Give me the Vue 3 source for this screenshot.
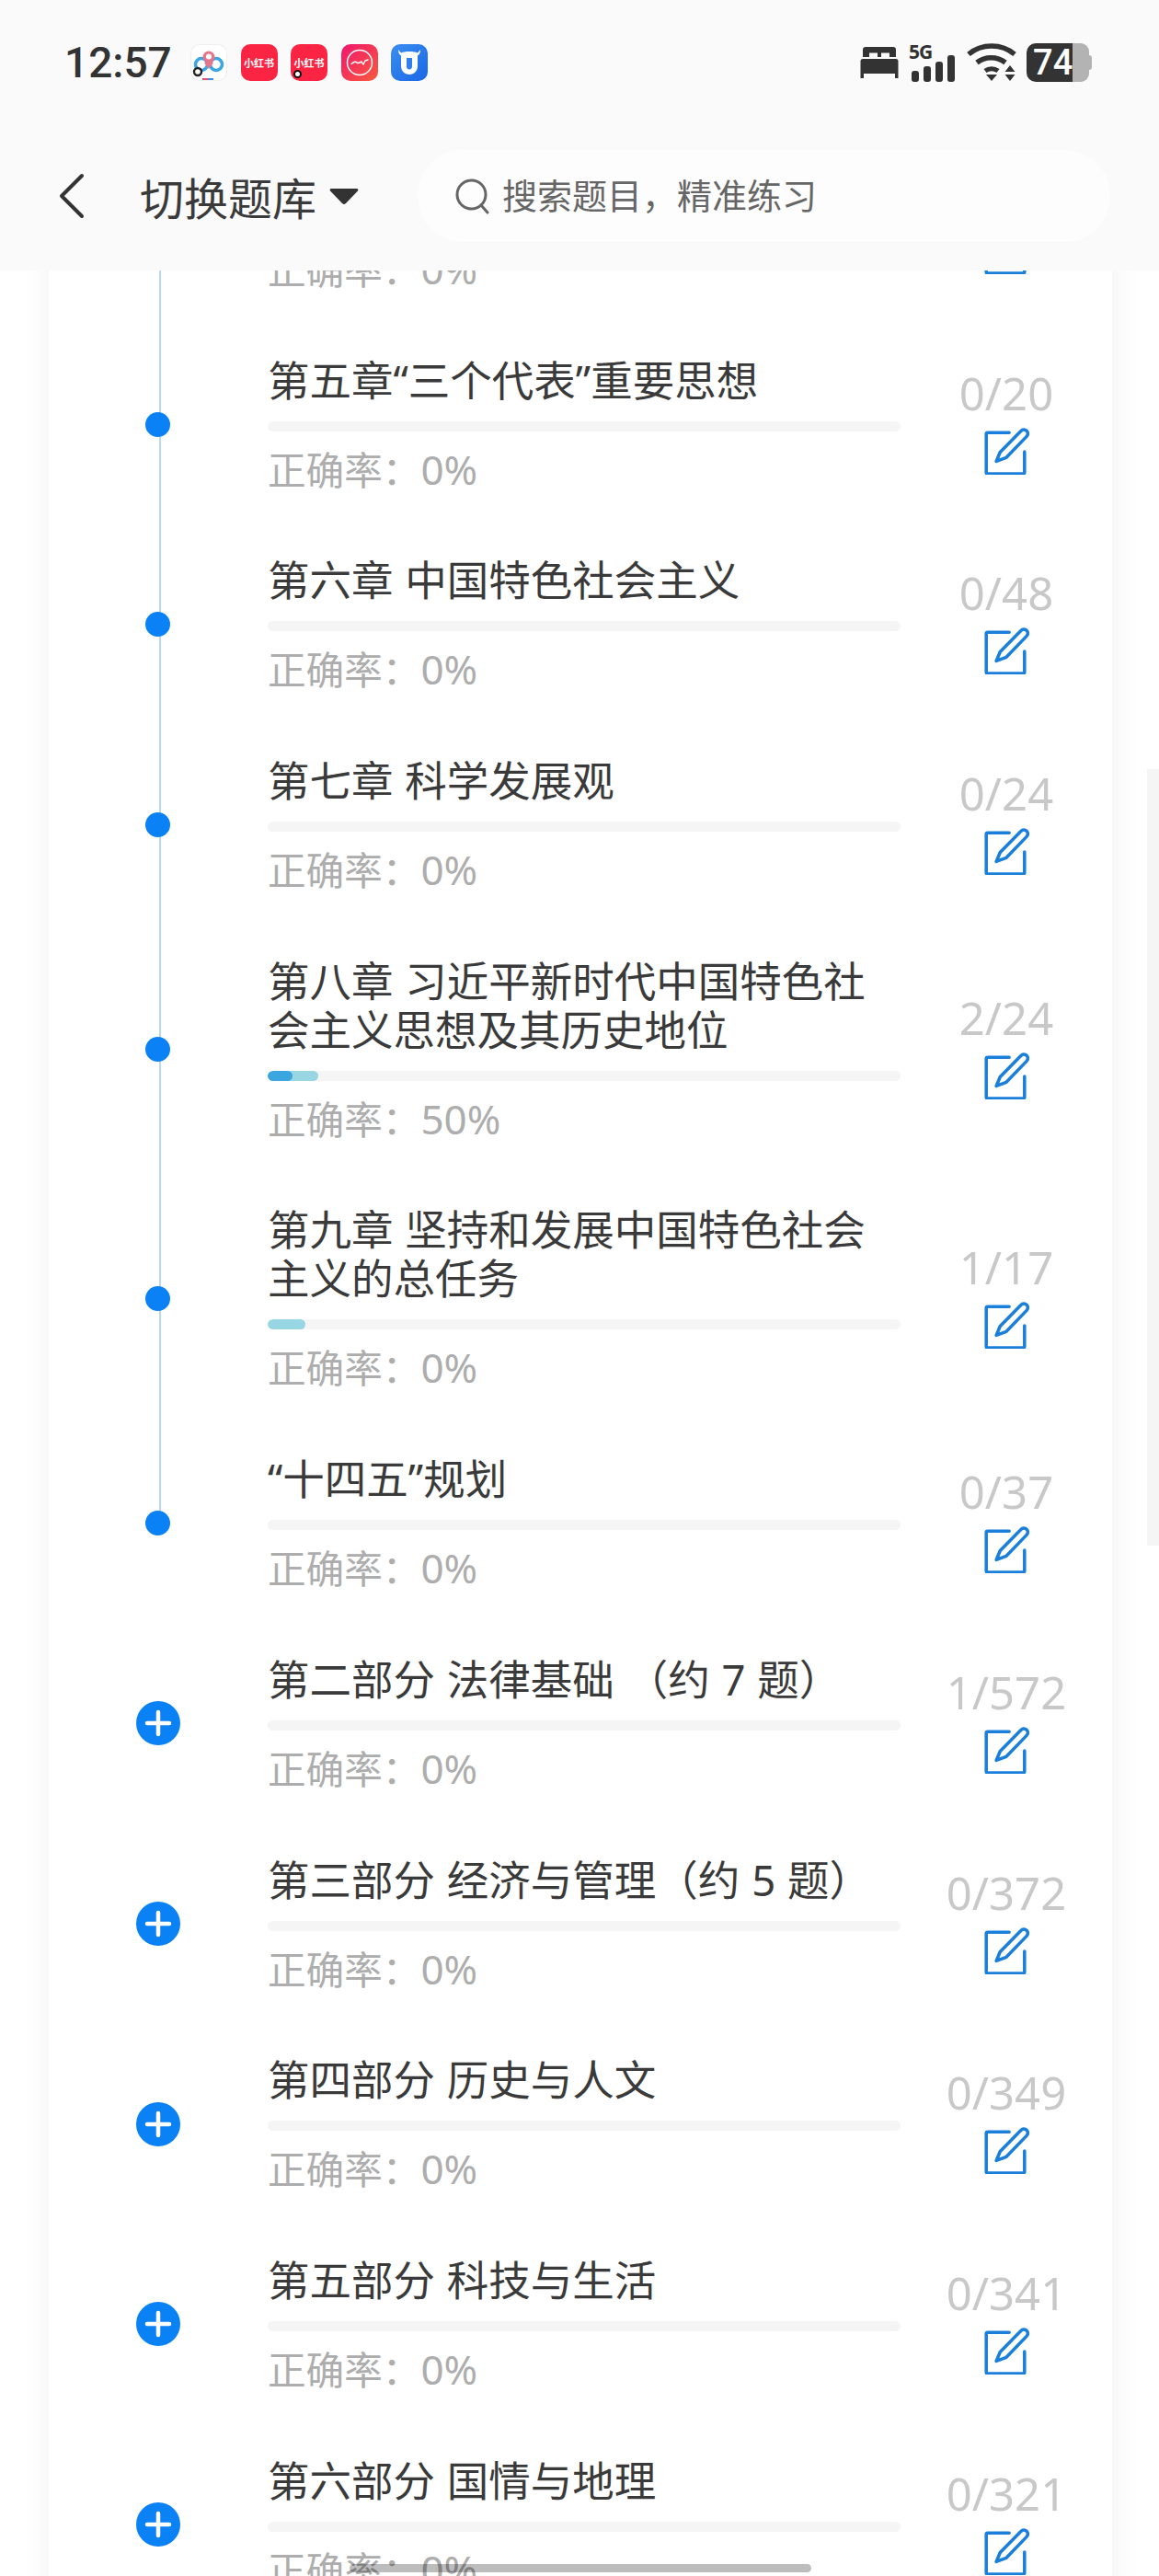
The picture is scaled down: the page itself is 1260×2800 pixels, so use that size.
<script setup>
const rows = [
  { title: '第四章 邓小平理论', count: '0/24', rate: '0%' },
  { title: '第五章“三个代表”重要思想', count: '0/20', rate: '0%' },
  { title: '第六章 中国特色社会主义', count: '0/48', rate: '0%' },
  { title: '第七章 科学发展观', count: '0/24', rate: '0%' },
  { title: '第八章 习近平新时代中国特色社会主义思想及其历史地位', count: '2/24', rate: '50%', done: 55, right: 27 },
  { title: '第九章 坚持和发展中国特色社会主义的总任务', count: '1/17', rate: '0%', done: 41 },
  { title: '“十四五”规划', count: '0/37', rate: '0%', last: true },
  { title: '第二部分 法律基础 （约 7 题）', count: '1/572', rate: '0%', plus: true },
  { title: '第三部分 经济与管理（约 5 题）', count: '0/372', rate: '0%', plus: true },
  { title: '第四部分 历史与人文', count: '0/349', rate: '0%', plus: true },
  { title: '第五部分 科技与生活', count: '0/341', rate: '0%', plus: true },
  { title: '第六部分 国情与地理', count: '0/321', rate: '0%', plus: true },
]
</script>

<template>
  <div class="page">
    <header class="top">
      <div class="status">
        <span class="time">12:57</span>
        <div class="apps">
          <span class="app app-white">
            <svg viewBox="0 0 40 40" width="40" height="40">
              <circle cx="12" cy="22" r="6.500" fill="none" stroke="#3aa6e6" stroke-width="3.600"/>
              <circle cx="28" cy="22" r="6.500" fill="none" stroke="#3aa6e6" stroke-width="3.600"/>
              <circle cx="20" cy="14" r="6.500" fill="#e8748a"/>
              <path d="M15 20l5 7 5-7z" fill="#e8748a"/>
              <circle cx="20" cy="13.500" r="3" fill="#fff"/>
              <circle cx="8" cy="30" r="4" fill="#fff" stroke="#222" stroke-width="2.400"/>
              <rect x="13" y="37" width="6" height="2" fill="#e8506e"/>
              <rect x="19" y="37" width="6" height="2" fill="#3a8ee6"/>
            </svg>
          </span>
          <span class="app app-red"><span class="red-text">小红书</span></span>
          <span class="app app-red"><span class="red-text">小红书</span><i class="badge"></i></span>
          <span class="app app-pink">
            <svg viewBox="0 0 40 40" width="40" height="40">
              <circle cx="20" cy="20" r="13.500" fill="none" stroke="#fff" stroke-width="1.500"/>
              <path d="M11 21.500c3-2.500 5-3 6-1.500s3 0 5-1c1 2 2 3 2 3l2-4 3-1" fill="none" stroke="#fff" stroke-width="1.500" stroke-linecap="round" stroke-linejoin="round"/>
            </svg>
          </span>
          <span class="app app-blue">
            <svg viewBox="0 0 40 40" width="40" height="40">
              <path d="M8 6c0 4 1.500 6 4 7h16c2.500-1 4-3 4-7l-3 3.500c-2-1-5-1.500-9-1.500s-7 .5-9 1.500z" fill="#fff"/>
              <path d="M11 12h18v12c0 5-4 9-9 9s-9-4-9-9z" fill="#fff"/>
              <path d="M17 15h6v9c0 2-1 3.500-3 3.500s-3-1.500-3-3.500z" fill="#2f80ed"/>
            </svg>
          </span>
        </div>
        <div class="sys">
          <svg class="bed" viewBox="0 0 42 36" width="42" height="36">
            <path d="M6 1h30a3 3 0 0 1 3 3v8h-7V7.500H23V12h-4V7.500h-9V12H3V4a3 3 0 0 1 3-3z" fill="#333"/>
            <path d="M3 14h36a2.500 2.500 0 0 1 2.500 2.500V35h-3.500v-5H4v5H.5V16.500A2.500 2.500 0 0 1 3 14z" fill="#333"/>
          </svg>
          <div class="signal">
            <span class="five-g">5G</span>
            <div class="bars">
              <i style="height: 12px"></i><i style="height: 17px"></i><i style="height: 22px"></i><i style="height: 29px"></i>
            </div>
          </div>
          <svg class="wifi" viewBox="0 0 54 44" width="54" height="44">
            <path d="M2 13C16 1 38 1 52 13" fill="none" stroke="#333" stroke-width="5.500"/>
            <path d="M11 22c9-7 22-7 31 0" fill="none" stroke="#333" stroke-width="5.500"/>
            <path d="M20 31c4-3 10-3 14 0" fill="none" stroke="#333" stroke-width="5"/>
            <path d="M21 35h12l-6 7z" fill="#333"/>
            <path d="M47 25l5.500 7h-11zM41.500 35h11L47 42z" fill="#333"/>
          </svg>
          <div class="battery">
            <span class="bat-dark"><span class="bat-num">74</span></span>
            <span class="bat-rest"></span>
            <span class="bat-nub"></span>
          </div>
        </div>
      </div>
      <div class="nav">
        <svg class="back" viewBox="0 0 30 50" width="30" height="50">
          <path d="M27 3L5 25l22 22" fill="none" stroke="#333" stroke-width="4" stroke-linecap="round" stroke-linejoin="round"/>
        </svg>
        <div class="switch">
          <span class="switch-text">切换题库</span>
          <svg class="caret" viewBox="0 0 32 20" width="32" height="20">
            <path d="M2 2h28a1.500 1.500 0 0 1 1 2.500L18 18a3 3 0 0 1-4 0L1 4.500A1.500 1.500 0 0 1 2 2z" fill="#333"/>
          </svg>
        </div>
        <div class="search">
          <svg viewBox="0 0 40 40" width="40" height="40">
            <circle cx="18.500" cy="18.500" r="15.500" fill="none" stroke="#666" stroke-width="3"/>
            <path d="M29 30l7 8" fill="none" stroke="#666" stroke-width="3" stroke-linecap="round"/>
          </svg>
          <span class="placeholder">搜索题目，精准练习</span>
        </div>
      </div>
    </header>

    <main class="viewport">
      <div class="card">
        <div v-for="(row, i) in rows" :key="i" class="row">
          <div class="rail">
            <span v-if="!row.plus && !row.last" class="line"></span>
            <span v-if="row.last" class="line line-half"></span>
            <svg v-if="row.plus" class="plus" viewBox="0 0 48 48" width="48" height="48">
              <circle cx="24" cy="24" r="24" fill="#0a82f5"/>
              <path d="M24 12v24M12 24h24" stroke="#fff" stroke-width="4.500" stroke-linecap="round"/>
            </svg>
            <span v-else class="dot"></span>
          </div>
          <div class="body">
            <div class="title">{{ row.title }}</div>
            <div class="bar">
              <div v-if="row.done" class="fill" :style="{ width: row.done + 'px' }">
                <div v-if="row.right" class="fill-right" :style="{ width: row.right + 'px' }"></div>
              </div>
            </div>
            <div class="rate">正确率：<span class="rate-num">{{ row.rate }}</span></div>
          </div>
          <div class="side">
            <div class="count">{{ row.count }}</div>
            <svg class="edit" viewBox="0 0 50 50" width="52" height="52">
              <path d="M29 6H6.500a1.500 1.500 0 0 0-1.500 1.500v40a1.500 1.500 0 0 0 1.500 1.500h37a1.500 1.500 0 0 0 1.500-1.500V26" fill="none" stroke="#1a7fdb" stroke-width="3.400" stroke-linecap="round" stroke-linejoin="round"/>
              <path d="M19.500 26.500L41 4.500c2-2 4.500-2 6.200-.3s1.600 4.100-.2 6L26 32 15.500 36z" fill="none" stroke="#1a7fdb" stroke-width="3.400" stroke-linejoin="round"/>
            </svg>
          </div>
        </div>
      </div>
    </main>
    <div class="scrollbar"></div>
    <div class="home"></div>
  </div>
</template>

<style scoped>
.page {
  position: relative;
  width: 1260px;
  height: 2800px;
  overflow: hidden;
  background: #fff;
  font-family: "Noto Sans", "Noto Sans CJK SC", sans-serif;
  color: #333;
}
.top {
  position: relative;
  z-index: 2;
  height: 294px;
  background: #fafafa;
  box-sizing: border-box;
  padding-top: 47px;
}
.status {
  display: flex;
  align-items: center;
  height: 42px;
  padding-left: 70px;
}
.time {
  font-size: 46px;
  font-weight: 500;
  line-height: 42px;
  width: 137px;
  color: #333;
  font-family: "Roboto", sans-serif;
}
.apps {
  display: flex;
  gap: 14.500px;
}
.app {
  position: relative;
  display: flex;
  align-items: center;
  justify-content: center;
  width: 40px;
  height: 40px;
  border-radius: 10px;
  overflow: hidden;
  box-sizing: border-box;
}
.app-white {
  background: #fff;
  box-shadow: inset 0 0 0 1px #eee;
}
.app-red {
  background: #fb2543;
}
.app-pink {
  background: linear-gradient(135deg, #f0166f, #fa5a3c);
}
.app-blue {
  background: linear-gradient(135deg, #3a8ff0, #1a66e6);
}
.red-text {
  color: #fff;
  font-size: 11px;
  font-weight: 700;
  white-space: nowrap;
  font-family: "Noto Sans CJK SC", sans-serif;
}
.badge {
  position: absolute;
  left: 3px;
  bottom: 3px;
  width: 5px;
  height: 5px;
  border: 2.500px solid #111;
  border-radius: 50%;
  background: #fff;
}
.sys {
  position: relative;
  display: flex;
  align-items: center;
  margin-left: 470px;
  height: 42px;
}
.bed {
  flex: none;
}
.signal {
  position: relative;
  width: 48px;
  height: 42px;
  margin-left: 14px;
}
.five-g {
  position: absolute;
  left: -3px;
  top: -1px;
  font-size: 21px;
  font-weight: 700;
  line-height: 20px;
  letter-spacing: -1px;
  color: #333;
}
.bars {
  position: absolute;
  left: 0;
  right: 0;
  bottom: 0;
  display: flex;
  align-items: flex-end;
  gap: 5.500px;
}
.bars i {
  width: 7.500px;
  border-radius: 3px;
  background: #333;
}
.wifi {
  flex: none;
  margin-left: 12px;
}
.battery {
  position: relative;
  display: flex;
  width: 71px;
  height: 42px;
  margin-left: 11px;
}
.bat-dark {
  display: flex;
  align-items: center;
  justify-content: flex-end;
  width: 51px;
  background: #333;
  border-radius: 10px 0 0 10px;
}
.bat-num {
  color: #fff;
  font-size: 38px;
  font-weight: 500;
  line-height: 42px;
  font-family: "Roboto", sans-serif;
}
.bat-rest {
  width: 18px;
  background: #b3b3b3;
  border-radius: 0 9px 9px 0;
}
.bat-nub {
  width: 3px;
  height: 16px;
  margin-top: 13px;
  background: #b3b3b3;
  border-radius: 0 3px 3px 0;
}
.nav {
  display: flex;
  align-items: center;
  height: 100px;
  margin-top: 74px;
  padding-left: 62px;
}
.back {
  flex: none;
}
.switch {
  display: flex;
  align-items: center;
  width: 362px;
  padding-left: 60px;
  box-sizing: border-box;
}
.switch-text {
  font-size: 48px;
  line-height: 60px;
  white-space: nowrap;
  color: #3a3a3a;
  font-family: "Noto Sans CJK SC", sans-serif;
}
.caret {
  flex: none;
  margin-left: 14px;
}
.search {
  display: flex;
  align-items: center;
  width: 753px;
  height: 100px;
  padding-left: 40px;
  box-sizing: border-box;
  border-radius: 50px;
  background: #fdfdfd;
}
.placeholder {
  margin-left: 12px;
  margin-top: -6px;
  font-size: 38px;
  color: #666;
  white-space: nowrap;
  font-family: "Noto Sans CJK SC", sans-serif;
}
.viewport {
  height: 2506px;
  overflow: hidden;
}
.card {
  width: 1156px;
  margin-left: 53px;
  margin-top: -127px;
  background: #fff;
  box-shadow: 0 0 33px rgba(0, 0, 0, 0.06);
}
.row {
  display: flex;
  padding: 0 0 64.700px;
}
.rail {
  position: relative;
  flex: none;
  display: flex;
  align-items: center;
  width: 238px;
}
.line {
  position: absolute;
  left: 120px;
  top: 0;
  bottom: -64.700px;
  width: 2px;
  background: #b5daf5;
}
.line-half {
  bottom: 50%;
}
.dot {
  position: relative;
  width: 27px;
  height: 27px;
  margin-left: 105px;
  border-radius: 50%;
  background: #0a82f5;
}
.plus {
  position: relative;
  flex: none;
  margin-left: 94.500px;
}
.body {
  flex: none;
  width: 688px;
}
.title {
  padding-top: 2px;
  font-size: 45.500px;
  line-height: 53px;
  word-spacing: 1px;
  color: #3a3a3a;
}
.bar {
  position: relative;
  height: 11px;
  margin-top: 18px;
  border-radius: 6px;
  background: #f5f5f5;
  overflow: hidden;
}
.fill {
  height: 100%;
  border-radius: 6px;
  background: #98d6e4;
}
.fill-right {
  height: 100%;
  border-radius: 6px;
  background: #3ba6e0;
}
.rate {
  height: 54px;
  margin-top: 15px;
  font-size: 41.600px;
  line-height: 54px;
  color: #adadad;
}
.rate-num {
  font-size: 44px;
  line-height: 1;
}
.side {
  display: flex;
  flex-direction: column;
  align-items: center;
  justify-content: center;
  flex: none;
  width: 230px;
  padding-bottom: 9px;
  box-sizing: border-box;
}
.count {
  font-size: 49px;
  line-height: 58px;
  font-weight: 400;
  color: #c8c8c8;
}
.edit {
  margin-top: 8px;
  margin-right: 2px;
}
.scrollbar {
  position: absolute;
  right: 0;
  top: 836px;
  width: 13px;
  height: 844px;
  background: #f5f5f5;
}
.home {
  position: absolute;
  left: 380px;
  bottom: 4px;
  width: 502px;
  height: 9px;
  border-radius: 5px;
  background: rgba(0, 0, 0, 0.26);
}
</style>
